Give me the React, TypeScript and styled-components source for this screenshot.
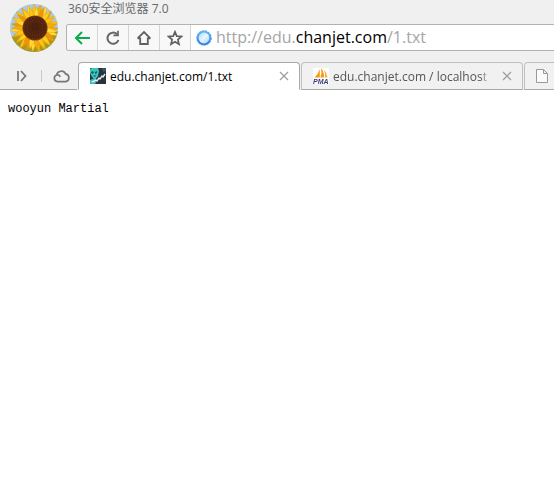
import React, { useState } from "react";
import styled, { createGlobalStyle, css } from "styled-components";

const GlobalStyle = createGlobalStyle`
  * { box-sizing: border-box; }
  body {
    margin: 0;
    background: #fff;
    font-family: "Open Sans", "Noto Sans CJK SC", sans-serif;
    overflow: hidden;
  }
`;

const Chrome = styled.header`
  background: #f0f0f0;
`;

const TopBar = styled.div`
  display: flex;
  height: 62px;
  padding-left: 10px;
  gap: 8px;
`;

const Avatar = styled.button`
  flex: none;
  width: 48px;
  height: 48px;
  margin-top: 4px;
  padding: 0;
  border: 0;
  border-radius: 50%;
  background: none;
  overflow: hidden;
  svg { display: block; }
`;

const Main = styled.div`
  flex: 1;
  min-width: 0;
`;

const Title = styled.div`
  height: 24px;
  padding-left: 2px;
  font-size: 12px;
  line-height: 18px;
  color: #66686c;
`;

const AddressBar = styled.div`
  display: flex;
  height: 27px;
  border: 1px solid #b2b2b2;
  border-right: 0;
  border-radius: 3px 0 0 3px;
  background: #fff;
  overflow: hidden;
`;

const ToolButton = styled.button`
  display: flex;
  flex: none;
  align-items: center;
  justify-content: center;
  width: 31px;
  padding: 0;
  border: 0;
  border-right: 1px solid #d4d4d4;
  background: #f8f8f8;
`;

const SiteIcon = styled.span`
  display: flex;
  align-items: center;
  flex: none;
  padding: 0 4px 0 5px;
`;

const UrlField = styled.label`
  position: relative;
  flex: 1;
  min-width: 0;
  font-size: 16px;
  line-height: 25px;
  white-space: nowrap;
`;

const UrlInput = styled.input<{ $plain: boolean }>`
  display: block;
  width: 100%;
  height: 25px;
  padding: 0;
  border: 0;
  outline: 0;
  background: none;
  font: inherit;
  color: ${(p) => (p.$plain ? "#000" : "transparent")};
`;

const UrlDisplay = styled.span`
  position: absolute;
  inset: 0;
  color: #a5a5a5;
  pointer-events: none;
`;

const Host = styled.span`
  color: #000;
`;

const TabStrip = styled.div`
  display: flex;
  height: 28px;
  gap: 1px;
  overflow: hidden;
`;

const StripTools = styled.div`
  display: flex;
  flex: none;
  align-items: center;
  width: 77px;
  padding-left: 15px;
  border-bottom: 1px solid #a8a8a8;
`;

const StripButton = styled.button`
  display: flex;
  padding: 0;
  border: 0;
  background: none;
`;

const Divider = styled.span`
  width: 1px;
  height: 12px;
  margin: 0 11px 0 13px;
  background: #c8c8c8;
`;

const Tab = styled.div<{ $active?: boolean }>`
  display: flex;
  flex: none;
  align-items: center;
  width: 222px;
  padding: 0 10px 0 11px;
  border: 1px solid #c0c0c0;
  border-radius: 4px 4px 0 0;
  border-bottom-color: #a8a8a8;
  background: #f1f1f1;
  color: #555;
  ${(p) =>
    p.$active &&
    css`
      border-color: #a8a8a8;
      border-bottom-color: #fff;
      background: #fff;
      color: #000;
    `}
`;

const TabLabel = styled.button<{ $fade?: boolean }>`
  display: flex;
  flex: 1;
  align-items: center;
  gap: 4px;
  min-width: 0;
  padding: 0;
  border: 0;
  background: none;
  font: inherit;
  font-size: 12px;
  line-height: 18px;
  color: inherit;
  white-space: nowrap;
  overflow: hidden;
  svg { flex: none; }
  ${(p) =>
    p.$fade &&
    css`
      mask-image: linear-gradient(to right, #000 94%, transparent 100%);
    `}
`;

const TabTitle = styled.span`
  padding-top: 1px;
`;

const CloseButton = styled.button`
  display: flex;
  flex: none;
  margin-left: 11px;
  padding: 0;
  border: 0;
  background: none;
`;

const Content = styled.pre`
  margin: 0;
  padding: 11px 8px;
  font-family: "Liberation Mono", monospace;
  font-size: 12px;
  line-height: 16px;
  color: #000;
`;

const petalColors = ["#fdc414", "#f5ab0c", "#ffdb35", "#ee960a", "#ffcd1b"];

function Sunflower() {
  const ring = (count: number, start: number, length: number, offset: number) =>
    Array.from({ length: count }, (_, i) => (
      <path
        key={`${length}-${i}`}
        d={`M25 24 Q20 ${24 - length / 2} 24 ${24 - length - (i % 3)} Q30 ${24 - length / 2} 25 24Z`}
        fill={petalColors[(i + start) % petalColors.length]}
        stroke="#dc8d0c"
        strokeWidth="0.3"
        transform={`rotate(${(i * 360) / count + offset} 25 24)`}
      />
    ));
  return (
    <svg width="48" height="48" viewBox="0 0 48 48" aria-hidden="true">
      <rect width="48" height="48" fill="#a9cbe2" />
      <path d="M0 33 48 27V48H0Z" fill="#a19a25" />
      {ring(23, 0, 24, 0)}
      {ring(19, 2, 21, 7)}
      <circle cx="25" cy="24" r="12.6" fill="#8f4a0e" />
      <circle cx="25" cy="24" r="11.8" fill="#4f230e" />
      <circle cx="25" cy="24" r="10.4" fill="none" stroke="#713614" strokeWidth="1.2" strokeDasharray="1 1.6" />
      <circle cx="25" cy="24" r="7.8" fill="none" stroke="#6b3316" strokeWidth="1.2" strokeDasharray="1 1.4" />
      <circle cx="25" cy="23" r="4.8" fill="#4a210f" stroke="#66301a" strokeDasharray="1 1.5" />
    </svg>
  );
}

const BackIcon = () => (
  <svg width="16" height="14" viewBox="0 0 16 14" fill="none" stroke="#0aae4b" strokeWidth="2" aria-hidden="true">
    <path d="M8 1 2 7l6 6M2 7h14" />
  </svg>
);

const ReloadIcon = () => (
  <svg width="16" height="16" viewBox="0 0 16 16" fill="none" stroke="#666" strokeWidth="2" aria-hidden="true">
    <path d="M12 4.2A5.6 5.6 0 1 0 13.4 10" />
    <path d="M13 .8v4.6H8.4" strokeWidth="1.7" />
  </svg>
);

const HomeIcon = () => (
  <svg width="16" height="16" viewBox="0 0 16 16" fill="none" stroke="#606060" strokeWidth="1.8" aria-hidden="true">
    <path d="M1.6 8.4 8 2l6.4 6.4M1.6 8.4h2.6V14h7.6V8.4h2.6" />
  </svg>
);

const StarIcon = () => (
  <svg width="16" height="16" viewBox="0 0 16 16" fill="none" stroke="#606060" strokeWidth="1.7" aria-hidden="true">
    <path d="m8 1.8 1.8 4.3 4.7.4-3.6 3.1 1.1 4.6L8 11.8 4 14.2l1.1-4.6-3.6-3.1 4.7-.4Z" />
  </svg>
);

const GlobeIcon = () => (
  <svg width="16" height="16" viewBox="0 0 16 16" aria-hidden="true">
    <defs>
      <linearGradient id="rim" x1="0" y1="0" x2="0" y2="1">
        <stop offset="0" stopColor="#64baf2" />
        <stop offset="1" stopColor="#3476db" />
      </linearGradient>
      <linearGradient id="ball" x1="0" y1="0" x2="1" y2="1">
        <stop offset="0" stopColor="#a9ddfa" />
        <stop offset="0.5" stopColor="#e6f6ff" />
        <stop offset="1" stopColor="#a4d6f8" />
      </linearGradient>
    </defs>
    <circle cx="8" cy="8" r="7.3" fill="url(#rim)" />
    <circle cx="8" cy="8" r="7.3" fill="none" stroke="#5a9fe8" strokeDasharray="2 1.2" />
    <circle cx="8" cy="8" r="5.4" fill="url(#ball)" />
  </svg>
);

const SidebarIcon = () => (
  <svg width="13" height="12" viewBox="0 0 13 12" fill="none" stroke="#777" strokeWidth="1.8" aria-hidden="true">
    <path d="M3 1v10M6 1l4.5 5L6 11" />
  </svg>
);

const CloudIcon = () => (
  <svg width="17" height="14" viewBox="0 0 17 14" fill="none" stroke="#777" strokeWidth="1.7" aria-hidden="true">
    <path d="M4.5 12.6a3.4 3.4 0 0 1-.9-6.6A4.8 4.8 0 0 1 12.6 4.9a3.9 3.9 0 0 1 0 7.7ZM3.6 6a4 4 0 0 1 3.8 1.7" />
  </svg>
);

const PhotoIcon = () => (
  <svg width="16" height="16" viewBox="0 0 16 16" aria-hidden="true">
    <path fill="#28333e" d="M0 0h16v16H0z" />
    <path fill="#37c5bd" d="M0 1 2 0h6l1 3-1 5-3 4-3-3-2-4Z" />
    <path fill="#1d5960" d="m1 4 2-1 1 2-2 1Zm4 0 2-1v2l-2 1ZM3 8l3-1-1 2Z" />
    <path fill="#44bbb8" d="m0 12 5-2 2 3-2 3H0Z" />
    <path d="m2 14 4-2 1 1 2-3 1 1 2-3 1 1 2-3" fill="none" stroke="#dcecef" strokeWidth="1.4" />
    <path fill="#425260" d="M12 0h4v3l-3 1Z" />
  </svg>
);

const PmaIcon = () => (
  <svg width="16" height="16" viewBox="0 0 16 16" aria-hidden="true">
    <path fill="#fff" d="M0 0h16v16H0z" />
    <path fill="#f79a11" d="M6.8 1v8.6H1.5Q5.4 6 6.8 1Z" />
    <path fill="#f79a11" d="M8 0q3.4 4 3 9.6H7.4Q9.2 5 8 0Z" />
    <path fill="#fbb03f" d="M10.8 1.6q3.4 3.6 3.8 8H12q.3-4.6-1.2-8Z" />
    <text x="0" y="16" fontFamily="Liberation Sans, sans-serif" fontSize="7" fontWeight="700" fontStyle="italic" fill="#373d79">PMA</text>
  </svg>
);

const PageIcon = () => (
  <svg width="12" height="14" viewBox="0 0 12 14" fill="#fafafa" stroke="#999" aria-hidden="true">
    <path d="M.5.5h7l4 4v9H.5ZM7.5.5v4h4" />
  </svg>
);

const CloseIcon = () => (
  <svg width="10" height="10" viewBox="0 0 10 10" stroke="#a0a0a0" strokeWidth="1.3" aria-hidden="true">
    <path d="m1 1 8 8M9 1 1 9" />
  </svg>
);

const tools = [
  { label: "后退", Icon: BackIcon },
  { label: "刷新", Icon: ReloadIcon },
  { label: "主页", Icon: HomeIcon },
  { label: "收藏", Icon: StarIcon },
];

export default function App() {
  const [url, setUrl] = useState("http://edu.chanjet.com/1.txt");
  const [editing, setEditing] = useState(false);
  const [, before, host, after] = url.match(/^(.*?)([^./]+\.[^./]+)(\/.*)?$/) ?? ["", url, "", ""];

  return (
    <>
      <GlobalStyle />
      <Chrome>
        <TopBar>
          <Avatar aria-label="用户"><Sunflower /></Avatar>
          <Main>
            <Title>360安全浏览器 7.0</Title>
            <AddressBar>
              {tools.map(({ label, Icon }) => (
                <ToolButton key={label} aria-label={label}><Icon /></ToolButton>
              ))}
              <SiteIcon><GlobeIcon /></SiteIcon>
              <UrlField>
                <UrlInput
                  $plain={editing}
                  aria-label="地址"
                  value={url}
                  spellCheck={false}
                  onChange={(e) => setUrl(e.target.value)}
                  onFocus={() => setEditing(true)}
                  onBlur={() => setEditing(false)}
                />
                {!editing && (
                  <UrlDisplay aria-hidden="true">
                    {before}<Host>{host}</Host>{after}
                  </UrlDisplay>
                )}
              </UrlField>
            </AddressBar>
          </Main>
        </TopBar>
        <TabStrip>
          <StripTools>
            <StripButton aria-label="侧边栏"><SidebarIcon /></StripButton>
            <Divider />
            <StripButton aria-label="云同步"><CloudIcon /></StripButton>
          </StripTools>
          <Tab $active>
            <TabLabel><PhotoIcon /><TabTitle>edu.chanjet.com/1.txt</TabTitle></TabLabel>
            <CloseButton aria-label="关闭标签页"><CloseIcon /></CloseButton>
          </Tab>
          <Tab>
            <TabLabel $fade><PmaIcon /><TabTitle>edu.chanjet.com / localhost</TabTitle></TabLabel>
            <CloseButton aria-label="关闭标签页"><CloseIcon /></CloseButton>
          </Tab>
          <Tab>
            <TabLabel aria-label="新标签页"><PageIcon /></TabLabel>
          </Tab>
        </TabStrip>
      </Chrome>
      <Content>wooyun Martial</Content>
    </>
  );
}
